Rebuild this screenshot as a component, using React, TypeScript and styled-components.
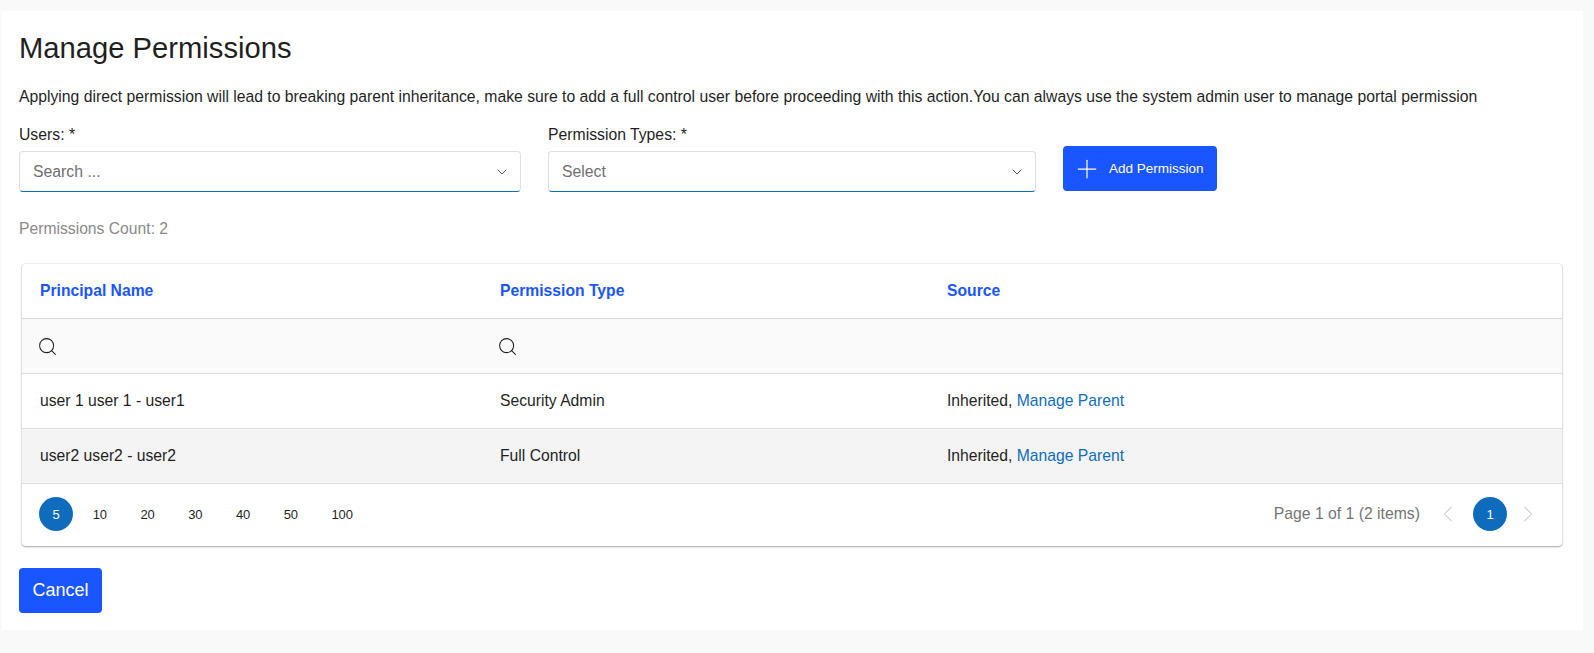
import React from 'react';
import styled, {createGlobalStyle} from "styled-components";
import {ChevronDown, ChevronLeft, ChevronRight, Plus, Search} from "lucide-react";

const GlobalStyle = createGlobalStyle`
  html, body {
    margin: 0;
    padding: 0;
    background: #f9f9f9;
    font-family: "Liberation Sans", Arial, sans-serif;
    color: #1f1f1f;
  }
`

const Panel = styled.div`
  margin: 11px 11px 23px 2px;
  height: 619px;
  box-sizing: border-box;
  padding: 21px 17px 0;
  background: #fff;
`

const Title = styled.h1`
  margin: 0;
  font-size: 29.2px;
  line-height: 32px;
  font-weight: 400;
`

const Notice = styled.p`
  margin: 23px 0 0;
  font-size: 15.74px;
  line-height: 20px;
`

const FormRow = styled.div`
  display: flex;
  align-items: flex-end;
  margin-top: 19px;
`

const Field = styled.div<{ $width: number; $gap: number }>`
  width: ${props => props.$width}px;
  margin-right: ${props => props.$gap}px;
`

const Label = styled.label`
  display: block;
  font-size: 15.75px;
  line-height: 18px;
  margin-bottom: 7px;
`

const SelectBox = styled.div`
  height: 41px;
  box-sizing: border-box;
  display: flex;
  align-items: center;
  justify-content: space-between;
  padding: 0 10px 0 13px;
  border: 1px solid #e0e0e0;
  border-bottom: 1px solid #0f6cbd;
  border-radius: 4px;
  font-size: 15.8px;
  color: #707070;
`

const AddButton = styled.button`
  width: 154px;
  height: 45px;
  margin-bottom: 1px;
  display: flex;
  align-items: center;
  gap: 7px;
  padding: 0 0 0 9px;
  border: none;
  border-radius: 4px;
  background: #1a56ff;
  color: #fff;
  font-family: inherit;
  font-size: 13.5px;
`

const Count = styled.div`
  margin-top: 28px;
  font-size: 15.7px;
  line-height: 18px;
  color: #8a8a8a;
`

const Card = styled.div`
  width: 1540px;
  margin: 26px 0 0 3px;
  background: #fff;
  border-radius: 4px;
  box-shadow: 0 0 2px rgba(0, 0, 0, 0.2), 0 1px 2px rgba(0, 0, 0, 0.3);
`

const Table = styled.table`
  width: 100%;
  table-layout: fixed;
  border-collapse: collapse;
  font-size: 15.7px;
`

const HeadCell = styled.th`
  height: 54px;
  padding: 0 18px;
  text-align: left;
  font-size: 15.7px;
  color: #1a56ff;
  border-bottom: 1px solid #ddd;
`

const FilterRow = styled.tr`
  background: #fafafa;
`

const FilterCell = styled.td`
  height: 54px;
  padding: 0 14.5px;
  border-bottom: 1px solid #ddd;
  line-height: 0;
`

const Row = styled.tr<{ $alt?: boolean }>`
  background: ${props => (props.$alt ? "#f4f4f4" : "#fff")};
`

const Cell = styled.td`
  height: 54px;
  padding: 0 18px;
  border-bottom: 1px solid #ddd;
`

const Link = styled.a`
  color: #0f6cbd;
  text-decoration: none;
`

const Pager = styled.div`
  height: 62px;
  box-sizing: border-box;
  display: flex;
  align-items: center;
  justify-content: space-between;
  padding: 0 20px 2px 17px;
`

const Sizes = styled.div`
  display: flex;
  align-items: center;
  gap: 6px;
`

const SizeItem = styled.span`
  padding: 0 13.65px;
  font-size: 13px;
`

const ActiveDot = styled.span`
  width: 34px;
  height: 34px;
  display: flex;
  align-items: center;
  justify-content: center;
  border-radius: 50%;
  background: #0f6cbd;
  color: #fff;
  font-size: 13px;
`

const Pages = styled.div`
  display: flex;
  align-items: center;
`

const PageInfo = styled.span`
  font-size: 15.75px;
  color: #757575;
  margin-right: 14px;
`

const Arrow = styled.span`
  display: flex;
  color: #c8c8c8;
`

const PrevArrow = styled(Arrow)`
  margin-right: 11px;
`

const NextArrow = styled(Arrow)`
  margin-left: 7px;
`

const CancelButton = styled.button`
  display: block;
  width: 83px;
  height: 45px;
  margin-top: 22px;
  padding: 0;
  border: none;
  border-radius: 4px;
  background: #1a56ff;
  color: #fff;
  font-family: inherit;
  font-size: 18px;
`

const rows = [
    {name: "user 1 user 1 - user1", type: "Security Admin"},
    {name: "user2 user2 - user2", type: "Full Control"},
]

const sizes = [10, 20, 30, 40, 50, 100]

export default function App() {
    return (
        <>
            <GlobalStyle/>
            <Panel>
                <Title>Manage Permissions</Title>
                <Notice>
                    Applying direct permission will lead to breaking parent inheritance, make sure to add a full control user before proceeding with this action.You can always use the system admin user to manage portal permission
                </Notice>
                <FormRow>
                    <Field $width={502} $gap={27}>
                        <Label>Users: *</Label>
                        <SelectBox>Search ...<ChevronDown size={16} strokeWidth={1.5} color="#555"/></SelectBox>
                    </Field>
                    <Field $width={488} $gap={27}>
                        <Label>Permission Types: *</Label>
                        <SelectBox>Select<ChevronDown size={16} strokeWidth={1.5} color="#555"/></SelectBox>
                    </Field>
                    <AddButton><Plus size={30} strokeWidth={1}/>Add Permission</AddButton>
                </FormRow>
                <Count>Permissions Count: 2</Count>
                <Card>
                    <Table>
                        <colgroup>
                            <col width={460}/>
                            <col width={447}/>
                            <col/>
                        </colgroup>
                        <thead>
                        <tr>
                            <HeadCell>Principal Name</HeadCell>
                            <HeadCell>Permission Type</HeadCell>
                            <HeadCell>Source</HeadCell>
                        </tr>
                        </thead>
                        <tbody>
                        <FilterRow>
                            <FilterCell><Search size={21} strokeWidth={1.15}/></FilterCell>
                            <FilterCell><Search size={21} strokeWidth={1.15}/></FilterCell>
                            <FilterCell/>
                        </FilterRow>
                        {rows.map((row, i) => (
                            <Row key={row.name} $alt={i % 2 === 1}>
                                <Cell>{row.name}</Cell>
                                <Cell>{row.type}</Cell>
                                <Cell>Inherited, <Link href="#">Manage Parent</Link></Cell>
                            </Row>
                        ))}
                        </tbody>
                    </Table>
                    <Pager>
                        <Sizes>
                            <ActiveDot>5</ActiveDot>
                            {sizes.map(size => <SizeItem key={size}>{size}</SizeItem>)}
                        </Sizes>
                        <Pages>
                            <PageInfo>Page 1 of 1 (2 items)</PageInfo>
                            <PrevArrow><ChevronLeft size={28} strokeWidth={0.9}/></PrevArrow>
                            <ActiveDot>1</ActiveDot>
                            <NextArrow><ChevronRight size={28} strokeWidth={0.9}/></NextArrow>
                        </Pages>
                    </Pager>
                </Card>
                <CancelButton>Cancel</CancelButton>
            </Panel>
        </>
    );
}
